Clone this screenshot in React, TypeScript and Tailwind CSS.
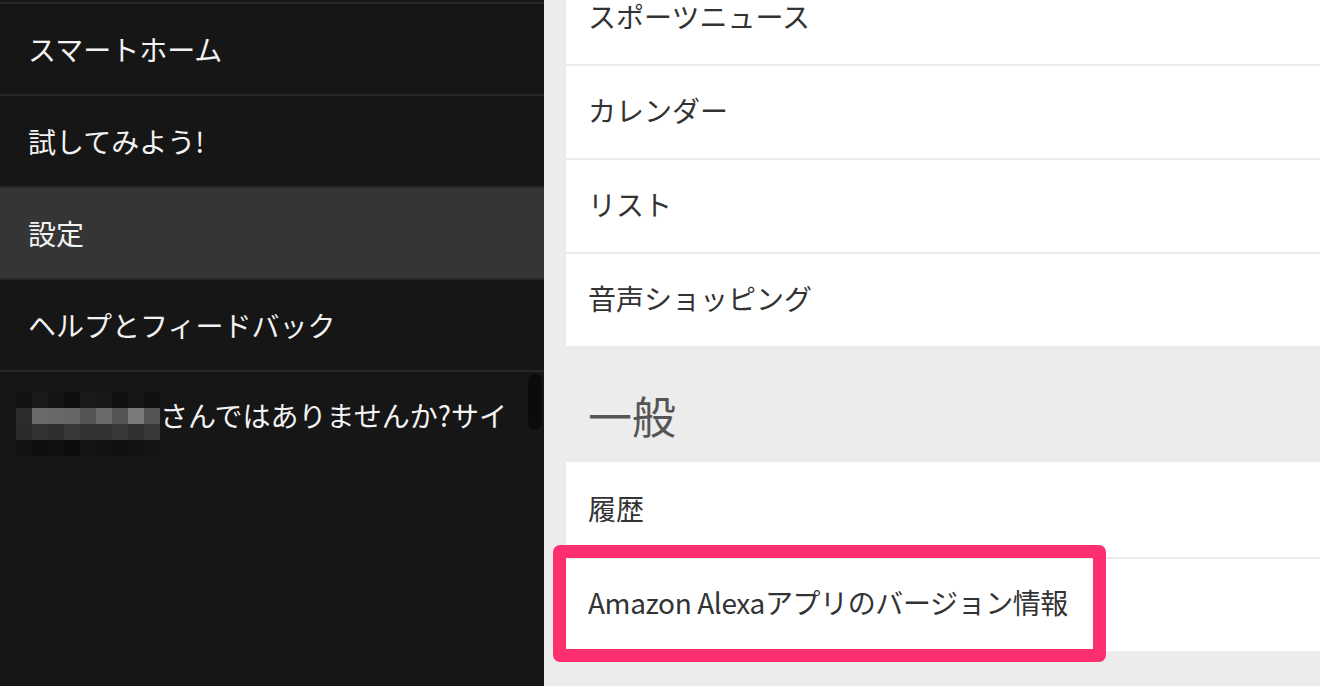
import React from "react";

const menu = ["スマートホーム", "試してみよう!", "設定", "ヘルプとフィードバック"];

// モザイク(名前隠し)
const mosaic = [
  ["#121212", "#1b1b1b", "#141414", "#0e0e0e", "#1b1b1b", "#181818", "#111111", "#161616", "#111111"],
  ["#2c2c2c", "#6a6a6a", "#686868", "#666666", "#555555", "#6a6a6a", "#555555", "#7a7a7a", "#555555"],
  ["#2a2a2a", "#333333", "#2e2e2e", "#383838", "#333333", "#333333", "#383838", "#303030", "#383838"],
  ["#121212", "#0f0f0f", "#101010", "#0c0c0c", "#141414", "#121212", "#101010", "#121212", "#141414"],
];

const topItems = ["スポーツニュース", "カレンダー", "リスト", "音声ショッピング"];

export default function App() {
  return (
    <div className="relative flex h-[686px] w-[1320px] overflow-hidden font-['Noto_Sans_CJK_JP','Noto_Sans',sans-serif]">
      {/* サイドメニュー */}
      <aside className="w-[544px] shrink-0 bg-[#161616] pt-[2px] text-[#f2f2f2]">
        {menu.map((label) => (
          <div
            key={label}
            className={`flex h-[92px] items-center border-t-2 border-[#282828] pl-[28px] text-[28px] ${
              label === "設定" ? "bg-[#353535]" : ""
            }`}
          >
            {label}
          </div>
        ))}
        <div className="relative flex border-t-2 border-[#282828] pl-[16px] pt-[20px]">
          <div className="grid grid-cols-9">
            {mosaic.flat().map((c, i) => (
              <div key={i} className="h-[16px] w-[16px]" style={{ backgroundColor: c }} />
            ))}
          </div>
          <span className="text-[28px] leading-[46px]">さんではありませんか?サイ</span>
          <div className="absolute right-[2px] top-[2px] h-[56px] w-[14px] rounded-full bg-[#0b0b0b]" />
        </div>
      </aside>

      {/* 設定リスト */}
      <main className="flex-1 bg-[#ececec] pl-[22px] text-[#333333]">
        <div className="mt-[-28px] bg-white">
          {topItems.map((label, i) => (
            <div
              key={label}
              className={`flex items-center pb-[4px] pl-[22px] text-[28px] ${
                i > 0 ? "h-[94px] border-t-2 border-[#ececec]" : "h-[92px]"
              }`}
            >
              {label}
            </div>
          ))}
        </div>
        <div className="flex h-[116px] items-center pl-[22px] pt-[22px] text-[44px] text-[#555555]">一般</div>
        <div className="bg-white">
          <div className="flex h-[95px] items-center pb-[4px] pl-[22px] text-[28px]">履歴</div>
          <div className="flex h-[94px] items-center border-t-2 border-[#ececec] pb-[6px] pl-[22px] text-[28px] tracking-[-0.4px]">
            Amazon Alexaアプリのバージョン情報
          </div>
        </div>
      </main>

      {/* 注目枠 */}
      <div className="absolute left-[553px] top-[545px] h-[117px] w-[553px] rounded-[7px] border-[13px] border-[#fd2f6f]" />
    </div>
  );
}
